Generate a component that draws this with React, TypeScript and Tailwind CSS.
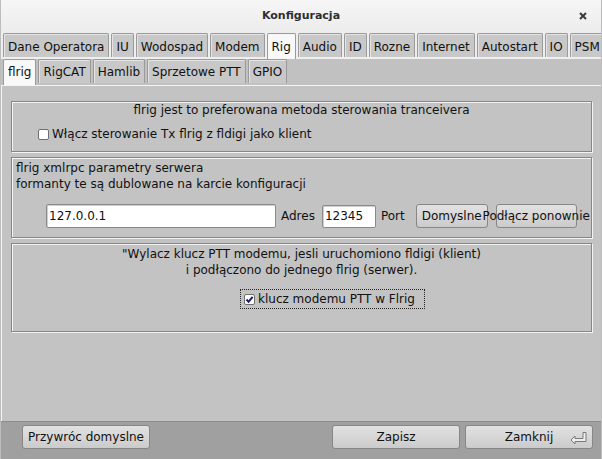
import React from "react";

const row1 = ["Dane Operatora", "IU", "Wodospad", "Modem", "Rig", "Audio", "ID", "Rozne", "Internet", "Autostart", "IO", "PSM"];
const row2 = ["flrig", "RigCAT", "Hamlib", "Sprzetowe PTT", "GPIO"];

function Tab({ label, selected, top }: { label: string; selected: boolean; top?: boolean }) {
  return (
    <div
      className={
        "shrink-0 px-[4px] flex items-center rounded-t-[2px] border border-b-0 whitespace-nowrap " +
        (top ? "pt-[3px] " : "") +
        (selected
          ? "h-[26px] bg-[#f8f8f8] border-[#9a9a9a] pb-[2px]"
          : "h-[24px] bg-[#c8c8c8] border-[#9a9a9a] shadow-[inset_1px_1px_0_#e4e4e4]")
      }
    >
      {label}
    </div>
  );
}

function Checkbox({ checked }: { checked: boolean }) {
  return (
    <div className="w-[11px] h-[11px] bg-white border border-[#6f6f6f] rounded-[2px] flex items-center justify-center shrink-0">
      {checked && (
        <svg width="9" height="9" viewBox="0 0 9 9">
          <path d="M1.5 4.5 L3.6 6.8 L7.6 1.8" fill="none" stroke="#1b1b6a" strokeWidth="2" />
        </svg>
      )}
    </div>
  );
}

function Button({ children, className = "" }: { children: React.ReactNode; className?: string }) {
  return (
    <div
      className={
        "h-[24px] flex items-center justify-center rounded-[3px] border border-[#878787] bg-gradient-to-b from-[#e2e2e2] to-[#cbcbcb] whitespace-nowrap shrink-0 " +
        className
      }
    >
      {children}
    </div>
  );
}

const panel = "border border-[#868686] shadow-[inset_1px_1px_0_#f4f4f4,1px_1px_0_#f4f4f4]";

export default function App() {
  return (
    <div className="w-[602px] h-[459px] overflow-hidden bg-[#efefef] font-['DejaVu_Sans',sans-serif] text-[12px] text-[#111] flex flex-col border-x border-[#bdbdbd]">
      {/* title bar */}
      <div className="h-[33px] shrink-0 relative flex items-center justify-center bg-gradient-to-b from-[#f6f6f6] to-[#ececec]">
        <span className="font-bold text-[11px] text-[#2e2e2e]">Konfiguracja</span>
        <svg className="absolute right-[14px] top-[12px]" width="8" height="8" viewBox="0 0 8 8">
          <path d="M1 1 L7 7 M7 1 L1 7" stroke="#3a3a3a" strokeWidth="2" />
        </svg>
      </div>
      {/* row 1 tabs */}
      <div className="h-[26px] shrink-0 flex items-start gap-[2px] pl-[2px]">
        {row1.map((t) => (
          <Tab key={t} label={t} selected={t === "Rig"} top />
        ))}
      </div>
      {/* Rig tab content */}
      <div className="flex-1 flex flex-col bg-[#c1c1c1]">
        <div className="h-[26px] shrink-0 flex items-start gap-[2px] pl-[2px]">
          {row2.map((t) => (
            <Tab key={t} label={t} selected={t === "flrig"} />
          ))}
        </div>
        {/* flrig content */}
        <div className="flex-1 flex flex-col gap-[5px] bg-[#c3c3c3] border-t border-l border-[#f4f4f4] px-[9px] pt-[15px]">
          {/* panel 1 */}
          <div className={"h-[51px] flex flex-col " + panel}>
            <div className="pt-[1px] leading-[14px] text-center">flrig jest to preferowana metoda sterowania tranceivera</div>
            <div className="mt-[10px] flex items-center gap-[3px] pl-[26px] leading-[14px]">
              <Checkbox checked={false} />
              <span>Włącz sterowanie Tx flrig z fldigi jako klient</span>
            </div>
          </div>
          {/* panel 2 */}
          <div className={"h-[81px] flex flex-col pl-[4px] " + panel}>
            <div className="pt-[2px] leading-[16px]">
              <div>flrig xmlrpc parametry serwera</div>
              <div>formanty te są dublowane na karcie konfiguracji</div>
            </div>
            <div className="mt-[12px] flex items-center pl-[30px]">
              <div className="w-[230px] h-[24px] bg-white border border-[#8a8a8a] rounded-[2px] shadow-[inset_1px_1px_0_#d0d0d0] flex items-center pl-[2px]">127.0.0.1</div>
              <span className="ml-[5px]">Adres</span>
              <div className="ml-[7px] w-[54px] h-[23px] bg-white border border-[#8a8a8a] rounded-[2px] shadow-[inset_1px_1px_0_#d0d0d0] flex items-center pl-[2px]">12345</div>
              <span className="ml-[5px]">Port</span>
              <Button className="ml-[11px] w-[72px]">Domyslne</Button>
              <Button className="ml-[8px] w-[81px]">Podłącz ponownie</Button>
            </div>
          </div>
          {/* panel 3 */}
          <div className={"h-[89px] flex flex-col " + panel}>
            <div className="pt-[2px] leading-[16px] text-center">
              <div>"Wylacz klucz PTT modemu, jesli uruchomiono fldigi (klient)</div>
              <div>i podłączono do jednego flrig (serwer).</div>
            </div>
            <div className="mt-[11px] ml-[228px] w-[185px] h-[20px] border border-dotted border-[#222] flex items-center gap-[3px] pl-[3px]">
              <Checkbox checked={true} />
              <span>klucz modemu PTT w Flrig</span>
            </div>
          </div>
          <div className="flex-1" />
        </div>
        {/* bottom bar */}
        <div className="h-[38px] shrink-0 bg-[#a0a0a0] border-t border-[#8c8c8c] flex items-start pt-[3px] pl-[21px] pr-[8px]">
          <Button className="w-[128px]">Przywróc domyslne</Button>
          <div className="flex-1" />
          <Button className="w-[128px]">Zapisz</Button>
          <Button className="ml-[5px] w-[128px] relative">
            Zamknij
            <svg className="absolute right-[4px] top-[5px]" width="18" height="14" viewBox="0 0 18 14">
              <path d="M1 9 L5 5 L5 7.5 L13 7.5 L13 1.5 L16 1.5 L16 10.5 L5 10.5 L5 13 Z" fill="#eeeeee" stroke="#7a7a7a" strokeWidth="1" />
            </svg>
          </Button>
        </div>
      </div>
    </div>
  );
}
